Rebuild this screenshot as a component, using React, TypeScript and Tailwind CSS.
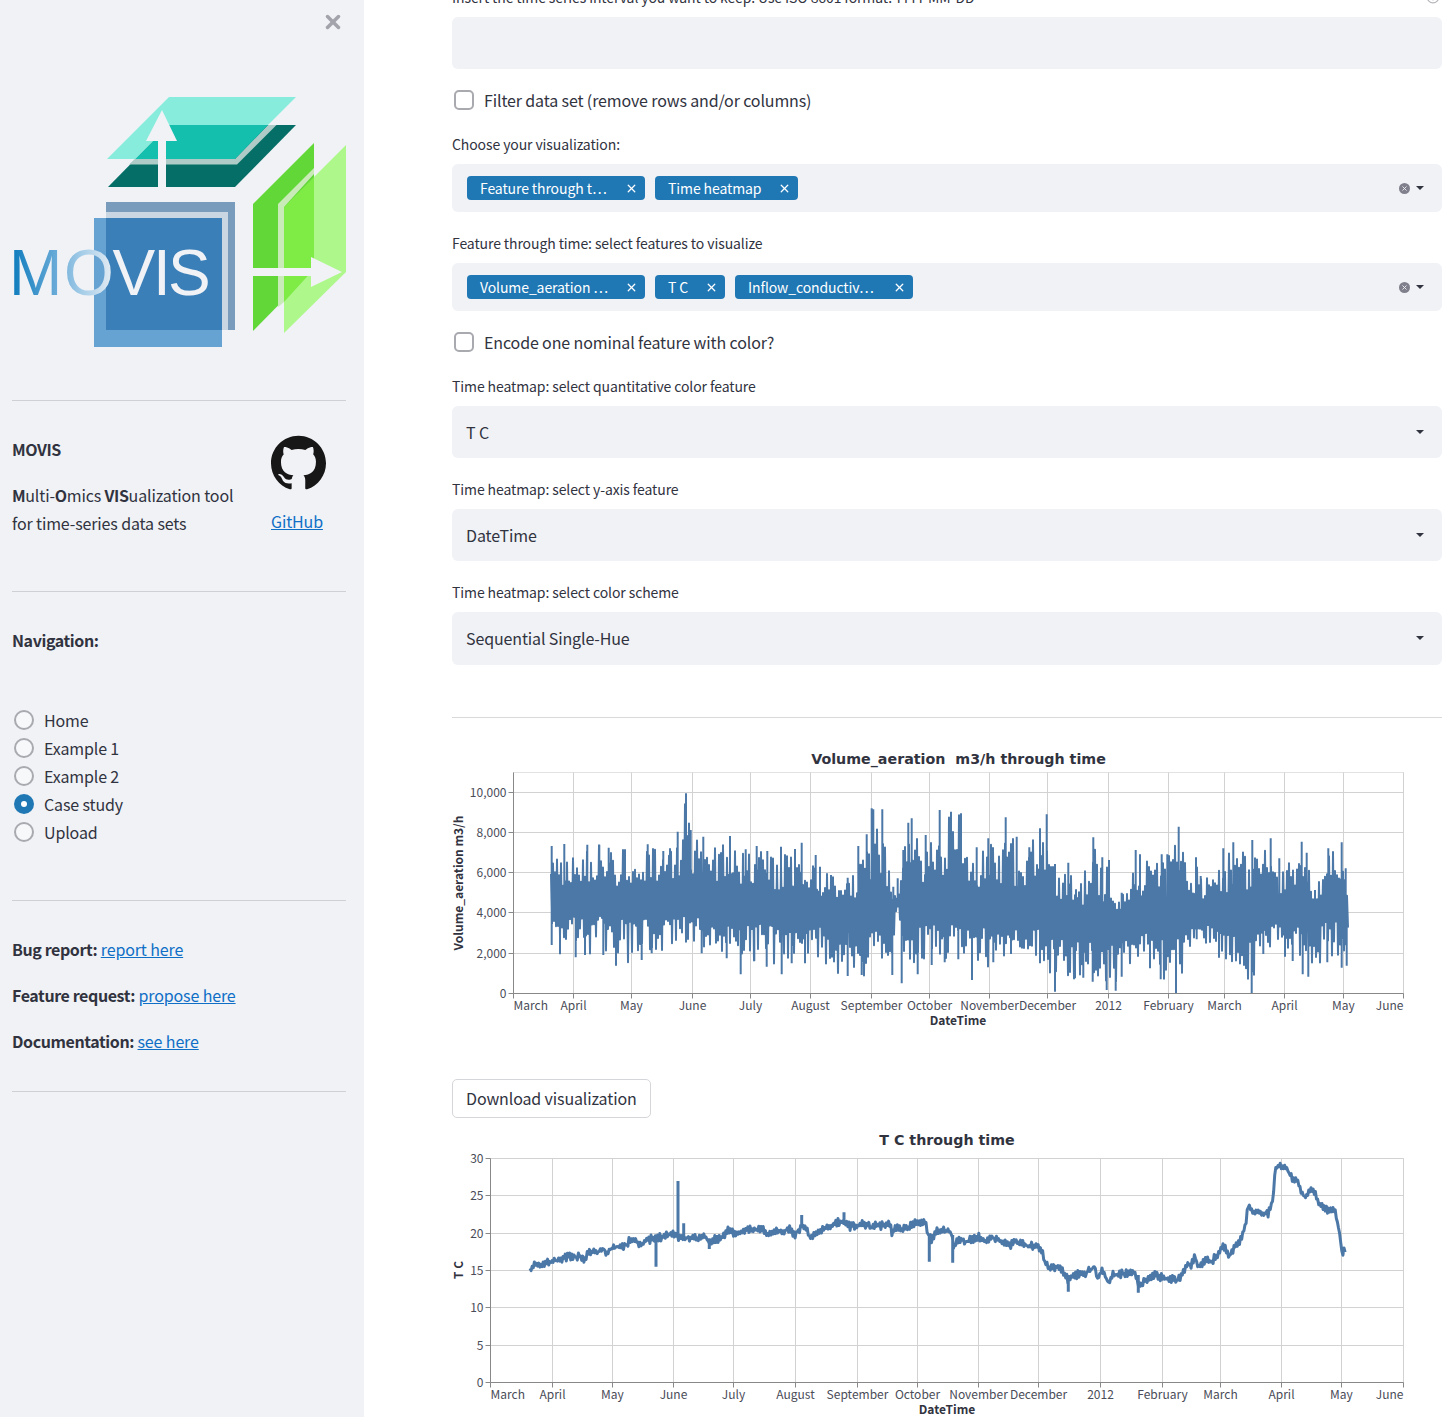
import React from 'react';
import { X, CircleHelp } from 'lucide-react';
import { SiGithub } from 'react-icons/si';

type Pt = [number, number];

const rng = (seed: number) => () => {
  seed = (seed * 1664525 + 1013904223) % 4294967296;
  return seed / 4294967296;
};

const interp = (pts: Pt[], x: number) => {
  if (x <= pts[0][0]) return pts[0][1];
  for (let i = 1; i < pts.length; i++) {
    if (x <= pts[i][0]) {
      const t = (x - pts[i - 1][0]) / (pts[i][0] - pts[i - 1][0] || 1);
      return pts[i - 1][1] + (pts[i][1] - pts[i - 1][1]) * t;
    }
  }
  return pts[pts.length - 1][1];
};

// points read off the reference, in 3x crop coordinates
const crop = (ox: number, oy: number, list: number[][]): Pt[] =>
  list.map(([x, y]) => [x / 3 + ox, y / 3 + oy] as Pt);

const volumeTop = [
  ...crop(445, 740, [[320,318],[358,312],[427,314],[463,314],[491,323],[540,328],[608,313],[655,333],[675,325],[698,275],[723,160],[737,270],[775,290],[855,288],[902,328],[935,318],[967,333],[1008,320],[1050,327],[1070,308],[1112,345],[1125,380],[1158,405],[1208,413],[1240,318],[1265,283],[1280,205],[1285,208],[1312,208],[1345,440],[1358,415],[1375,330],[1390,248],[1400,235],[1442,285],[1484,210]]),
  ...crop(940, 740, [[33,215],[63,220],[110,322],[145,295],[197,232],[230,290],[268,322],[300,265],[320,223],[345,372],[385,368],[408,448],[460,292],[487,352],[507,360],[545,458],[587,330],[600,343],[665,343],[682,343],[716,260],[768,352],[782,408],[850,325],[880,307],[937,300],[992,295],[1018,355],[1085,305],[1100,338],[1125,450],[1165,325],[1205,307],[1217,385]]),
];

const volumeBottom = [
  ...crop(445, 740, [[320,615],[345,643],[392,652],[420,645],[475,645],[513,677],[590,660],[620,640],[770,640],[845,655],[887,703],[928,663],[965,680],[1010,703],[1040,670],[1080,670],[1208,708],[1250,705],[1342,705],[1352,500],[1360,500],[1370,730],[1418,703],[1460,675]]),
  ...crop(940, 740, [[14,667],[55,658],[96,720],[160,667],[213,642],[300,670],[345,755],[405,715],[430,713],[458,725],[500,750],[527,752],[545,710],[630,685],[662,718],[708,760],[770,598],[837,653],[935,760],[970,642],[1035,650],[1058,663],[1088,703],[1105,710],[1162,667],[1205,683],[1220,677]]),
];

const volumeMid: Pt[] = [[551,903],[700,900],[800,908],[860,915],[900,905],[1000,905],[1050,915],[1100,925],[1200,915],[1347,905]];

const buildVolumePath = () => {
  const r = rng(17);
  let d = '';
  let slowTop = 0.5;
  let slowBottom = 0.5;
  for (let x = 551; x <= 1347; x += 2) {
    slowTop += (r() - slowTop) * 0.35;
    slowBottom += (r() - slowBottom) * 0.35;
    const mid = interp(volumeMid, x);
    const top = mid - (mid - interp(volumeTop, x)) * (0.2 + 0.98 * (0.6 * r() + 0.4 * slowTop) ** 1.4);
    const bottom = mid + (interp(volumeBottom, x) - mid) * (0.2 + 0.98 * (0.6 * r() + 0.4 * slowBottom) ** 1.4);
    d += `${d ? 'L' : 'M'}${x.toFixed(1)} ${top.toFixed(1)}L${(x + 1).toFixed(1)} ${bottom.toFixed(1)}`;
  }
  volumeTop.forEach(([x, y]) => { d += `M${x.toFixed(1)} ${y.toFixed(1)}V${interp(volumeMid, x).toFixed(1)}`; });
  volumeBottom.forEach(([x, y]) => { d += `M${x.toFixed(1)} ${y.toFixed(1)}V${interp(volumeMid, x).toFixed(1)}`; });
  return d;
};

const tempLine = [
  ...crop(445, 1125, [[255,440],[262,425],[280,420],[300,413],[320,408],[345,408],[365,395],[385,395],[405,395],[420,405],[430,382],[460,382],[475,370],[485,390],[490,375],[510,368],[540,362],[558,342],[575,350],[590,362],[600,350],[625,338],[635,340],[650,335],[680,328],[700,335],[715,340],[740,338],[765,342],[775,325],[790,350],[820,340],[835,335],[850,315],[875,328],[900,318],[930,310],[955,312],[965,330],[990,318],[1010,322],[1030,308],[1050,328],[1070,305],[1085,310],[1095,340],[1120,318],[1150,305],[1180,292],[1200,290],[1208,303],[1240,302],[1260,295],[1280,310],[1295,295],[1305,302],[1335,295],[1340,325],[1350,310],[1380,312],[1410,295],[1440,295],[1450,330],[1460,345],[1475,315],[1490,320]]),
  ...crop(940, 1125, [[15,318],[35,320],[40,370],[50,345],[80,350],[120,335],[135,350],[150,335],[180,345],[210,360],[230,350],[260,360],[295,365],[305,375],[315,415],[330,430],[358,425],[375,450],[385,470],[400,450],[430,450],[465,425],[472,460],[485,435],[505,470],[520,450],[550,445],[585,445],[597,480],[610,470],[645,450],[670,458],[710,465],[730,445],[745,415],[755,420],[765,390],[775,425],[795,405],[815,410],[850,365],[870,395],[885,360],[905,340],[915,300],[925,245],[945,265],[985,265],[1000,220],[1005,130],[1020,120],[1040,130],[1060,170],[1070,160],[1085,200],[1095,220],[1115,190],[1135,230],[1160,255],[1185,255],[1198,320],[1207,390],[1212,370],[1216,372]]),
];

const tempSpikes: number[][] = [
  [445 + 633 / 3, 1125 + 340 / 3, 1125 + 425 / 3],
  [445 + 699 / 3, 1125 + 335 / 3, 1125 + 168 / 3],
  [445 + 716 / 3, 1125 + 345 / 3, 1125 + 295 / 3],
  [445 + 793 / 3, 1125 + 340 / 3, 1125 + 372 / 3],
  [445 + 1070 / 3, 1125 + 310 / 3, 1125 + 270 / 3],
  [445 + 1197 / 3, 1125 + 295 / 3, 1125 + 262 / 3],
  [445 + 1453 / 3, 1125 + 330 / 3, 1125 + 410 / 3],
  [940 + 38 / 3, 1125 + 330 / 3, 1125 + 413 / 3],
  [940 + 385 / 3, 1125 + 450 / 3, 1125 + 500 / 3],
  [940 + 595 / 3, 1125 + 450 / 3, 1125 + 503 / 3],
];

const buildTempPath = () => {
  const r = rng(5);
  const endX = tempLine[tempLine.length - 1][0];
  let d = '';
  let side = 1;
  for (let x = tempLine[0][0]; x <= endX; x += 1.1) {
    const calm = x > 1337 && x < 1342 ? 0.2 : 1;
    side = -side;
    const jitter = (r() - 0.5) * 4;
    const y = Math.max(1159, interp(tempLine, x) + (side * (1 + r() * 1.6) + jitter) * calm);
    d += `${d ? 'L' : 'M'}${x.toFixed(1)} ${y.toFixed(1)}`;
  }
  tempSpikes.forEach(([x, a, b]) => { d += `M${x.toFixed(1)} ${a.toFixed(1)}V${b.toFixed(1)}`; });
  return d;
};

const volumePath = buildVolumePath();
const tempPath = buildTempPath();

const monthsA: [string, number][] = [['April', 573.5], ['May', 631.5], ['June', 692.5], ['July', 750.5], ['August', 810.5], ['September', 871.5], ['October', 929.5], ['November', 989.5], ['December', 1047.5], ['2012', 1108.5], ['February', 1168.5], ['March', 1224.5], ['April', 1284.5], ['May', 1343.5]];
const monthsB: [string, number][] = [['April', 552.5], ['May', 612.5], ['June', 673.5], ['July', 733.5], ['August', 795.5], ['September', 857.5], ['October', 917.5], ['November', 978.5], ['December', 1038.5], ['2012', 1100.5], ['February', 1162.5], ['March', 1220.5], ['April', 1281.5], ['May', 1341.5]];

interface ChartProps {
  top: number;
  height: number;
  left: number;
  plotTop: number;
  plotBottom: number;
  title: string;
  titleY: number;
  yTitle: string;
  yTitleCenter: number;
  months: [string, number][];
  yTicks: [string, number][];
  path: string;
  lineWidth: number;
  labelY: number;
  axisTitleX: number;
}

const Chart: React.FC<ChartProps> = ({ top, height, left, plotTop, plotBottom, title, titleY, yTitle, yTitleCenter, months, yTicks, path, lineWidth, labelY, axisTitleX }) => {
  const right = 1403.5;
  return (
    <svg className="block" width={990} height={height} viewBox={`452 ${top} 990 ${height}`}>
      <rect x={left} y={plotTop} width={right - left} height={plotBottom - plotTop} fill="none" stroke="#e2e2e2" />
      {yTicks.map(([, y]) => <line key={y} x1={left} x2={right} y1={y} y2={y} stroke="#d2d2d2" />)}
      {months.map(([, x], i) => <line key={i} x1={x} x2={x} y1={plotTop} y2={plotBottom} stroke="#d2d2d2" />)}
      <path d={path} fill="none" stroke="#4c78a8" strokeWidth={lineWidth} strokeLinejoin="round" />
      <line x1={left} x2={left} y1={plotTop} y2={plotBottom} stroke="#888" />
      <line x1={right} x2={right} y1={plotTop} y2={plotBottom} stroke="#d2d2d2" />
      <line x1={left} x2={right} y1={plotBottom} y2={plotBottom} stroke="#888" />
      {yTicks.map(([label, y]) => (
        <g key={label}>
          <line x1={left - 5} x2={left} y1={y} y2={y} stroke="#888" />
          <text x={left - 7} y={y + 4} textAnchor="end" fontSize={12} fill="#4a4c58">{label}</text>
        </g>
      ))}
      {[left, ...months.map(m => m[1]), right].map((x, i) => (
        <line key={i} x1={x} x2={x} y1={plotBottom} y2={plotBottom + 5} stroke="#888" />
      ))}
      <text x={left} y={labelY} fontSize={12} fill="#4a4c58">March</text>
      {months.map(([label, x], i) => (
        <text key={i} x={x} y={labelY} textAnchor="middle" fontSize={12} fill="#4a4c58">{label}</text>
      ))}
      <text x={right} y={labelY} textAnchor="end" fontSize={12} fill="#4a4c58">June</text>
      <text x={axisTitleX} y={labelY + 15} textAnchor="middle" fontSize={12} fontWeight={700} fill="#31333f">DateTime</text>
      <text x={0} y={0} transform={`translate(463 ${yTitleCenter}) rotate(-90)`} textAnchor="middle" fontSize={12} fontWeight={700} fill="#31333f">{yTitle}</text>
      <text x={(left + right) / 2} y={titleY} textAnchor="middle" fontSize={14.25} fontWeight={700} fill="#31333f" fontFamily="'DejaVu Sans', sans-serif" xmlSpace="preserve">{title}</text>
    </svg>
  );
};

const MovisLogo = () => (
  <svg className="block" width={364} height={265} viewBox="0 90 364 265">
    <defs>
      <linearGradient id="movisText" gradientUnits="userSpaceOnUse" x1="12" y1="0" x2="112" y2="0">
        <stop offset="0" stopColor="#0e7cbd" />
        <stop offset="0.45" stopColor="#6aabd8" />
        <stop offset="0.7" stopColor="#a5cde8" />
        <stop offset="1" stopColor="#e3ebf3" />
      </linearGradient>
    </defs>
    {/* top plates */}
    <polygon points="169,125 296,125 235,187 108,187" fill="#056e66" />
    <polygon points="129,164.5 237,164.5 276.5,125 268,125 235,159 135,159" fill="#aecbc8" />
    <polygon points="169,125 268,125 235,159 135,159" fill="#15bfae" />
    <polygon points="169,97 296,97 268,125 169,125 135,159 107,159" fill="#88ecdc" />
    <polygon points="162,110 177,141 166,141 166,187 158,187 158,141 146,141" fill="#f0f2f6" />
    {/* front squares */}
    <rect x={106} y={202} width={129} height={128} fill="#7a9cbc" />
    <rect x={106} y={212} width={122} height={118} fill="#cbd6e3" />
    <rect x={94} y={218} width={128} height={129} fill="#66a3d2" />
    <rect x={106} y={218} width={116} height={112} fill="#3a7fb8" />
    {/* side panels */}
    <polygon points="284,207 346,145 346,272 284,333" fill="#aef78b" />
    <polygon points="253,204 314,143 314,269 253,331" fill="#62d738" />
    <polygon points="284,207 314,177 314,269 284,302" fill="#7eec45" />
    <polygon points="278,204 314,168 314,174 284,207 284,302 278,307" fill="#c8ebb8" />
    <polygon points="253,268 311,268 311,257 342,272 311,287 311,276 253,276" fill="#f0f2f6" />
    {/* wordmark */}
    <text y={295} fontSize={64} fontFamily="'Liberation Sans', sans-serif" fill="url(#movisText)">
      <tspan x={9}>M</tspan>
      <tspan x={64}>O</tspan>
    </text>
    <text y={295} fontSize={64} fontFamily="'Liberation Sans', sans-serif" fill="#f0f2f6">
      <tspan x={112.5}>V</tspan>
      <tspan x={153}>I</tspan>
      <tspan x={168}>S</tspan>
    </text>
  </svg>
);

const Divider = () => <hr className="ml-3 mr-[18px] border-0 border-t border-[#cfd0d6]" />;

const Strong = ({ children }: { children: React.ReactNode }) => (
  <span className="font-semibold tracking-[-0.4px]">{children}</span>
);

const Radio = ({ label, checked = false }: { label: string; checked?: boolean }) => (
  <div className="flex h-[28px] items-center">
    {checked ? (
      <span className="ml-[14px] flex h-5 w-5 items-center justify-center rounded-full bg-[#1f77b4]">
        <span className="h-[6px] w-[6px] rounded-full bg-white" />
      </span>
    ) : (
      <span className="ml-[14px] h-5 w-5 rounded-full border-2 border-[#a9a9b0] bg-[#f7f8fa]" />
    )}
    <span className="ml-[10px] text-base tracking-[-0.13px] text-[#31333f]">{label}</span>
  </div>
);

const Sidebar = () => (
  <aside className="relative h-full w-[364px] shrink-0 bg-[#f0f2f6] text-[#31333f]">
    <X className="absolute right-[20px] top-[11px] text-[#a3a3ac]" size={22} strokeWidth={3.8} />
    <div className="pt-[90px]">
      <MovisLogo />
    </div>
    <div className="mt-[45px]"><Divider /></div>

    <div className="mt-[34px] flex pl-3">
      <div className="w-[259px] text-base leading-[28px] tracking-[-0.13px]">
        <p><Strong>MOVIS</Strong></p>
        <p className="mt-[18px]"><Strong>M</Strong>ulti-<Strong>O</Strong>mics <Strong>VIS</Strong>ualization tool</p>
        <p>for time-series data sets</p>
      </div>
      <div>
        <SiGithub size={55} className="text-[#181717]" />
        <a href="#" className="mt-[17px] block text-base leading-[28px] tracking-[-0.13px] text-[#0f6fc6] underline">GitHub</a>
      </div>
    </div>

    <div className="mt-[54px]"><Divider /></div>
    <p className="mt-[34px] px-3 text-base leading-[28px]"><Strong>Navigation:</Strong></p>
    <div className="mt-[52px]">
      <Radio label="Home" />
      <Radio label="Example 1" />
      <Radio label="Example 2" />
      <Radio label="Case study" checked />
      <Radio label="Upload" />
    </div>

    <div className="mt-[54px]"><Divider /></div>
    <div className="mt-[34px] space-y-[18px] px-3 text-base leading-[28px] tracking-[-0.13px]">
      <p><Strong>Bug report:</Strong> <a href="#" className="text-[#0f6fc6] underline">report here</a></p>
      <p><Strong>Feature request:</Strong> <a href="#" className="text-[#0f6fc6] underline">propose here</a></p>
      <p><Strong>Documentation:</Strong> <a href="#" className="text-[#0f6fc6] underline">see here</a></p>
    </div>
    <div className="mt-[36px]"><Divider /></div>
  </aside>
);

const FieldLabel = ({ children, className = '' }: { children: React.ReactNode; className?: string }) => (
  <p className={`h-5 text-sm leading-5 tracking-[-0.1px] text-[#31333f] ${className}`}>{children}</p>
);

const Caret = () => (
  <span className="h-0 w-0 border-x-[4px] border-t-[4px] border-x-transparent border-t-[#31333f]" />
);

const Check = ({ label, className = '' }: { label: string; className?: string }) => (
  <div className={`flex h-[28px] items-center ${className}`}>
    <span className="ml-[2px] h-5 w-5 rounded-[5px] border-2 border-[#a9a9b0] bg-white" />
    <span className="ml-[10px] text-base tracking-[-0.13px] text-[#31333f]">{label}</span>
  </div>
);

const Tag = ({ label, className }: { label: string; className: string }) => (
  <span className={`flex h-6 items-center justify-between rounded-[4px] bg-[#1f77b4] pl-[13px] pr-[7px] text-sm tracking-[-0.1px] text-white ${className}`}>
    <span className="whitespace-nowrap">{label}</span>
    <X size={13} strokeWidth={2.4} />
  </span>
);

const MultiSelect = ({ children, className = '' }: { children: React.ReactNode; className?: string }) => (
  <div className={`flex h-12 items-center justify-between rounded-[6px] bg-[#f0f2f6] pl-[15px] pr-[18px] ${className}`}>
    <div className="flex gap-[10px]">{children}</div>
    <div className="flex items-center gap-[6px]">
      <span className="flex h-[11px] w-[11px] items-center justify-center rounded-full bg-[#7f808c] text-[#f0f2f6]">
        <X size={7} strokeWidth={3} />
      </span>
      <Caret />
    </div>
  </div>
);

const Select = ({ value, className = '' }: { value: string; className?: string }) => (
  <div className={`flex items-center justify-between rounded-[6px] bg-[#f0f2f6] pl-[14px] pr-[18px] text-base tracking-[-0.13px] text-[#31333f] ${className}`}>
    <span>{value}</span>
    <Caret />
  </div>
);

export default function App() {
  return (
    <div className="flex h-[1417px] w-full overflow-hidden bg-white font-['Noto_Sans_CJK_SC','Noto_Sans',sans-serif]">
      <Sidebar />
      <main className="relative min-w-0 flex-1 pl-[88px] pr-[10px]">
        <div className="mt-[-13px]">
          <div className="relative">
            <FieldLabel>Insert the time series interval you want to keep. Use ISO 8601 format: YYYY-MM-DD</FieldLabel>
            <CircleHelp className="absolute right-[2px] top-[3px] text-[#b4b4ba]" size={14} />
          </div>
          <div className="mt-[10px] h-[52px] rounded-[6px] bg-[#f0f2f6]" />
          <Check className="mt-[17px]" label="Filter data set (remove rows and/or columns)" />

          <FieldLabel className="mt-[20px]">Choose your visualization:</FieldLabel>
          <MultiSelect className="mt-[10px]">
            <Tag className="w-[178px]" label="Feature through t…" />
            <Tag className="w-[143px]" label="Time heatmap" />
          </MultiSelect>

          <FieldLabel className="mt-[21px]">Feature through time: select features to visualize</FieldLabel>
          <MultiSelect className="mt-[10px]">
            <Tag className="w-[178px]" label="Volume_aeration …" />
            <Tag className="w-[70px]" label="T C" />
            <Tag className="w-[178px]" label="Inflow_conductiv…" />
          </MultiSelect>

          <Check className="mt-[17px]" label="Encode one nominal feature with color?" />

          <FieldLabel className="mt-[20px]">Time heatmap: select quantitative color feature</FieldLabel>
          <Select className="mt-[10px] h-[52px]" value="T C" />
          <FieldLabel className="mt-[21px]">Time heatmap: select y-axis feature</FieldLabel>
          <Select className="mt-[10px] h-[52px]" value="DateTime" />
          <FieldLabel className="mt-[21px]">Time heatmap: select color scheme</FieldLabel>
          <Select className="mt-[10px] h-[53px] pb-[1px]" value="Sequential Single-Hue" />

          <hr className="mt-[52px] border-0 border-t border-[#d9d9dc]" />

          <div className="mt-[22px]">
            <Chart
              top={740}
              height={300}
              left={513.5}
              plotTop={772.5}
              plotBottom={993.5}
              title="Volume_aeration  m3/h through time"
              titleY={764}
              yTitle="Volume_aeration  m3/h"
              yTitleCenter={883}
              months={monthsA}
              yTicks={[['10,000', 792.5], ['8,000', 832.5], ['6,000', 872.5], ['4,000', 912.5], ['2,000', 953.5], ['0', 993.5]]}
              path={volumePath}
              lineWidth={2}
              labelY={1010}
              axisTitleX={958}
            />
          </div>

          <button className="mt-[39px] block h-[39px] w-[199px] rounded-[5px] border border-[#d5d6da] bg-white pb-[2px] pl-[13px] text-left text-base tracking-[-0.13px] text-[#31333f]">
            Download visualization
          </button>

          <div className="mt-[7px]">
            <Chart
              top={1125}
              height={292}
              left={490.5}
              plotTop={1158.5}
              plotBottom={1382.5}
              title="T C through time"
              titleY={1145}
              yTitle="T C"
              yTitleCenter={1270}
              months={monthsB}
              yTicks={[['30', 1158.5], ['25', 1195.5], ['20', 1233.5], ['15', 1270.5], ['10', 1307.5], ['5', 1345.5], ['0', 1382.5]]}
              path={tempPath}
              lineWidth={3}
              labelY={1399}
              axisTitleX={947}
            />
          </div>
        </div>
      </main>
    </div>
  );
}
